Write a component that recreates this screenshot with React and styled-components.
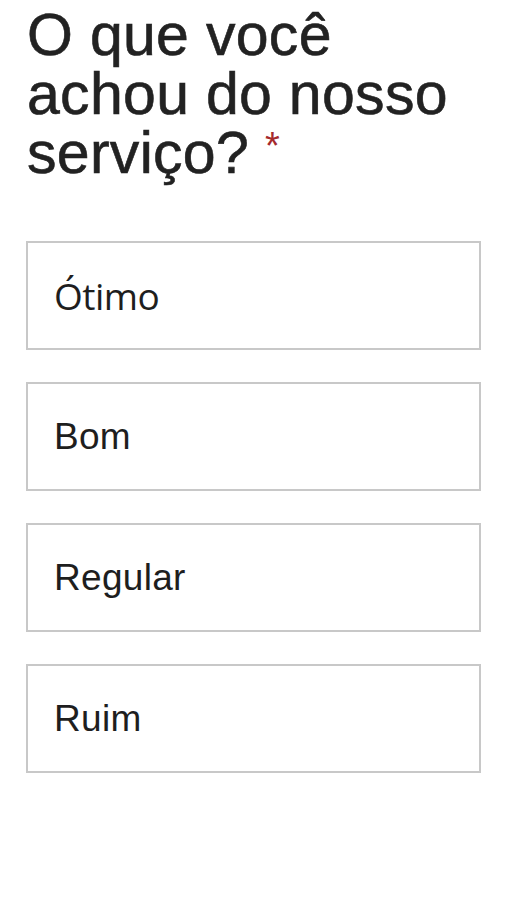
import React from "react";
import styled, { createGlobalStyle } from "styled-components";

const GlobalStyle = createGlobalStyle`
    html, body {
        margin: 0;
        padding: 0;
        background: #ffffff;
    }
`;

/*CSS*/
const Page = styled.div`
    padding: 6px 25px 0 26px;
    font-family: "Liberation Sans", Arial, sans-serif;
    color: #222222;
`;

const Question = styled.h1`
    margin: 0;
    padding-left: 1px;
    font-size: 59px;
    font-weight: normal;
    line-height: 59px;
    letter-spacing: 0.3px;
    width: 455px;
    -webkit-text-stroke: 0.6px #222222;
`;

const Required = styled.span`
    color: #a52a2d;
    font-size: 38px;
    line-height: 0;
    vertical-align: 14px;
    margin-left: 16px;
    -webkit-text-stroke: 0;
`;

const Options = styled.div`
    display: flex;
    flex-direction: column;
    gap: 32px;
    margin-top: 58px;
`;

const Option = styled.div`
    box-sizing: border-box;
    height: 109px;
    border: 2px solid #c8c8c8;
    display: flex;
    align-items: center;
    padding: 0 26px;
    font-size: 37px;
    color: #1e1e1e;
    font-family: ${(p) => (p.$alt ? '"Open Sans", sans-serif' : '"Liberation Sans", Arial, sans-serif')};
    letter-spacing: ${(p) => (p.$alt ? "-0.5px" : "0.3px")};
`;

const choices = [
    { label: "Ótimo", alt: true },
    { label: "Bom" },
    { label: "Regular" },
    { label: "Ruim" },
];

export default function App() {
    return (
        <Page>
            <GlobalStyle />
            <Question>
                O que você achou do nosso serviço?<Required>*</Required>
            </Question>
            <Options>
                {choices.map((c) => (
                    <Option key={c.label} $alt={c.alt}>{c.label}</Option>
                ))}
            </Options>
        </Page>
    );
}
